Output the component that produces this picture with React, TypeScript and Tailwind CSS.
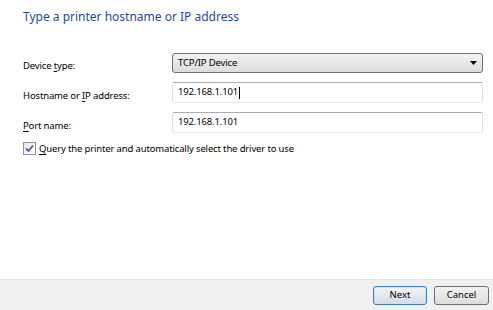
import React from "react";

const FONT = { fontFamily: '"Noto Sans", "Open Sans", Arial, sans-serif' };

function Label({ text, accessIndex }: { text: string; accessIndex: number }) {
  return (
    <span className="text-[9.5px] tracking-[-0.15px] text-black leading-none">
      {text.slice(0, accessIndex)}
      <span className="underline underline-offset-2">{text[accessIndex]}</span>
      {text.slice(accessIndex + 1)}
    </span>
  );
}

export default function App() {
  return (
    <div className="w-[493px] h-[310px] bg-white flex flex-col overflow-hidden" style={FONT}>
      {/* Main area */}
      <div className="flex-1 flex flex-col pl-[23px] pr-[10px]">
        <h1 className="mt-[7px] text-[12px] leading-[20px] text-[#1e4a9c] font-normal">
          Type a printer hostname or IP address
        </h1>

        <div className="mt-[26px] flex flex-col gap-[9px]">
          {/* Device type */}
          <div className="flex items-center h-[20px]">
            <div className="w-[149px]">
              <Label text="Device type:" accessIndex={7} />
            </div>
            <div className="relative flex-1 h-[20px] rounded-[3px] border border-[#707070] bg-gradient-to-b from-[#f3f3f3] to-[#dcdcdc] flex items-center pl-[5px]">
              <span className="text-[9.5px] tracking-[-0.15px] text-black">TCP/IP Device</span>
              <svg className="absolute right-[5px] top-[7px]" width="7" height="4" viewBox="0 0 7 4">
                <path d="M0 0 H7 L3.5 4 Z" fill="#000" />
              </svg>
            </div>
          </div>

          {/* Hostname */}
          <div className="flex items-center h-[21px]">
            <div className="w-[149px]">
              <Label text="Hostname or IP address:" accessIndex={12} />
            </div>
            <div className="flex-1 h-[21px] border border-[#abadb3] border-b-[#e3e9ef] border-x-[#dbdfe6] rounded-[2px] flex items-center pl-[5px]">
              <span className="text-[9.5px] tracking-[-0.15px] text-black">192.168.1.101</span>
              <span className="w-px h-[12px] bg-black ml-[1px]" />
            </div>
          </div>

          {/* Port name */}
          <div className="flex items-center h-[21px]">
            <div className="w-[149px]">
              <Label text="Port name:" accessIndex={0} />
            </div>
            <div className="flex-1 h-[21px] border border-[#abadb3] border-b-[#e3e9ef] border-x-[#dbdfe6] rounded-[2px] flex items-center pl-[5px]">
              <span className="text-[9.5px] tracking-[-0.15px] text-black">192.168.1.101</span>
            </div>
          </div>
        </div>

        {/* Checkbox */}
        <div className="mt-[9px] flex items-center gap-[3px]">
          <div className="w-[13px] h-[13px] border border-[#8e8f8f] bg-gradient-to-br from-[#e6e6e6] to-[#ffffff] flex items-center justify-center">
            <svg width="9" height="9" viewBox="0 0 9 9">
              <path d="M1 4.5 L3.5 7 L8 1.5" fill="none" stroke="#4a5f97" strokeWidth="1.8" />
            </svg>
          </div>
          <Label text="Query the printer and automatically select the driver to use" accessIndex={0} />
        </div>
      </div>

      {/* Footer */}
      <div className="h-[31px] bg-[#f0f0f0] border-t border-[#e4e4e4] flex items-center justify-end gap-[7px] pr-[4px]">
        <button className="w-[54px] h-[19px] rounded-[3px] border border-[#3c7fb1] bg-gradient-to-b from-[#f2f2f2] to-[#d6dde6] text-[9.5px] text-black leading-none shadow-[inset_0_0_0_1px_#c2e4f6]">
          Next
        </button>
        <button className="w-[55px] h-[19px] rounded-[3px] border border-[#707070] bg-gradient-to-b from-[#f2f2f2] to-[#dddddd] text-[9.5px] text-black leading-none">
          Cancel
        </button>
      </div>
    </div>
  );
}
